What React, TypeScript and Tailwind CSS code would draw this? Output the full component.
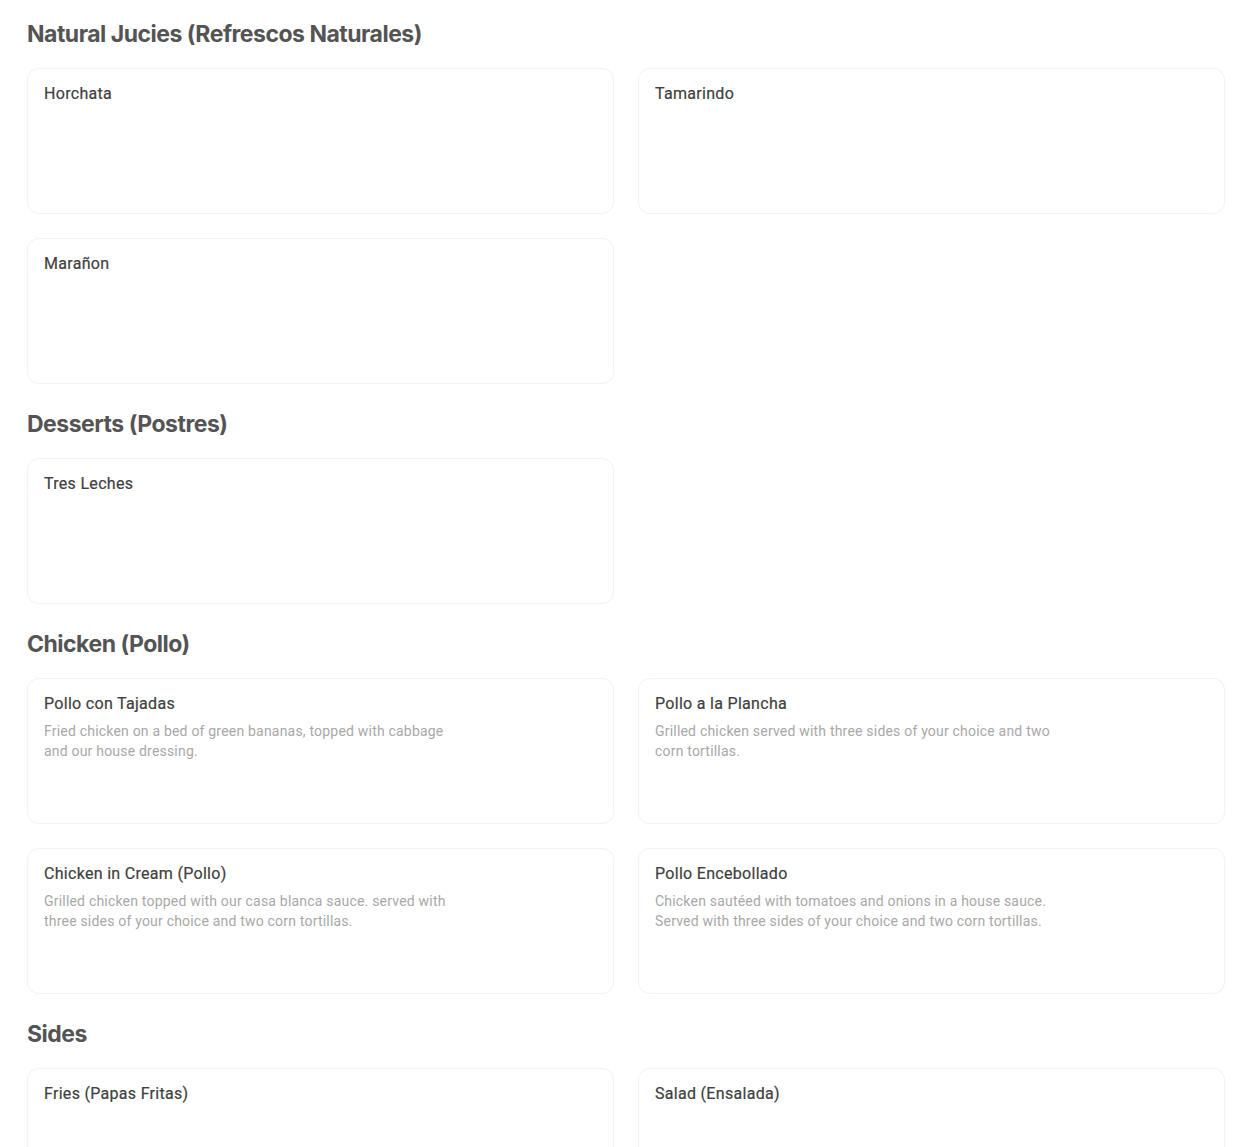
import React from "react";

type Item = { name: string; desc?: string };
type Section = { title: string; items: Item[] };

const sections: Section[] = [
  {
    title: "Natural Jucies (Refrescos Naturales)",
    items: [{ name: "Horchata" }, { name: "Tamarindo" }, { name: "Marañon" }],
  },
  {
    title: "Desserts (Postres)",
    items: [{ name: "Tres Leches" }],
  },
  {
    title: "Chicken (Pollo)",
    items: [
      {
        name: "Pollo con Tajadas",
        desc: "Fried chicken on a bed of green bananas, topped with cabbage and our house dressing.",
      },
      {
        name: "Pollo a la Plancha",
        desc: "Grilled chicken served with three sides of your choice and two corn tortillas.",
      },
      {
        name: "Chicken in Cream (Pollo)",
        desc: "Grilled chicken topped with our casa blanca sauce. served with three sides of your choice and two corn tortillas.",
      },
      {
        name: "Pollo Encebollado",
        desc: "Chicken sautéed with tomatoes and onions in a house sauce. Served with three sides of your choice and two corn tortillas.",
      },
    ],
  },
  {
    title: "Sides",
    items: [{ name: "Fries (Papas Fritas)" }, { name: "Salad (Ensalada)" }],
  },
];

const Card = ({ item }: { item: Item }) => (
  <div className="h-[146px] rounded-xl border border-[#f3f3f3] bg-white px-4 pt-[15px] shadow-[0_0_2px_rgba(0,0,0,0.02)]">
    <div className="text-[16px] leading-5 tracking-[0.3px] text-[#404040] [-webkit-text-stroke:0.2px_#404040]">
      {item.name}
    </div>
    {item.desc && (
      <p className="mt-[7px] max-w-[412px] text-[14px] leading-5 tracking-[0.2px] text-[#a8a8a8]">{item.desc}</p>
    )}
  </div>
);

export default function App() {
  return (
    <div
      className="min-h-screen bg-white pl-[27px] pr-[25px] pt-[18px] flex flex-col gap-6"
      style={{ fontFamily: "Roboto, 'Liberation Sans', sans-serif" }}
    >
      {sections.map((s) => (
        <section key={s.title}>
          <h2
            className="mb-[18px] h-8 text-[23px] leading-8 font-bold tracking-[-0.5px] text-[#545454]"
            style={{ fontFamily: "Inter, 'Liberation Sans', sans-serif" }}
          >
            {s.title}
          </h2>
          <div className="grid grid-cols-2 gap-6">
            {s.items.map((it) => (
              <Card key={it.name} item={it} />
            ))}
          </div>
        </section>
      ))}
    </div>
  );
}
